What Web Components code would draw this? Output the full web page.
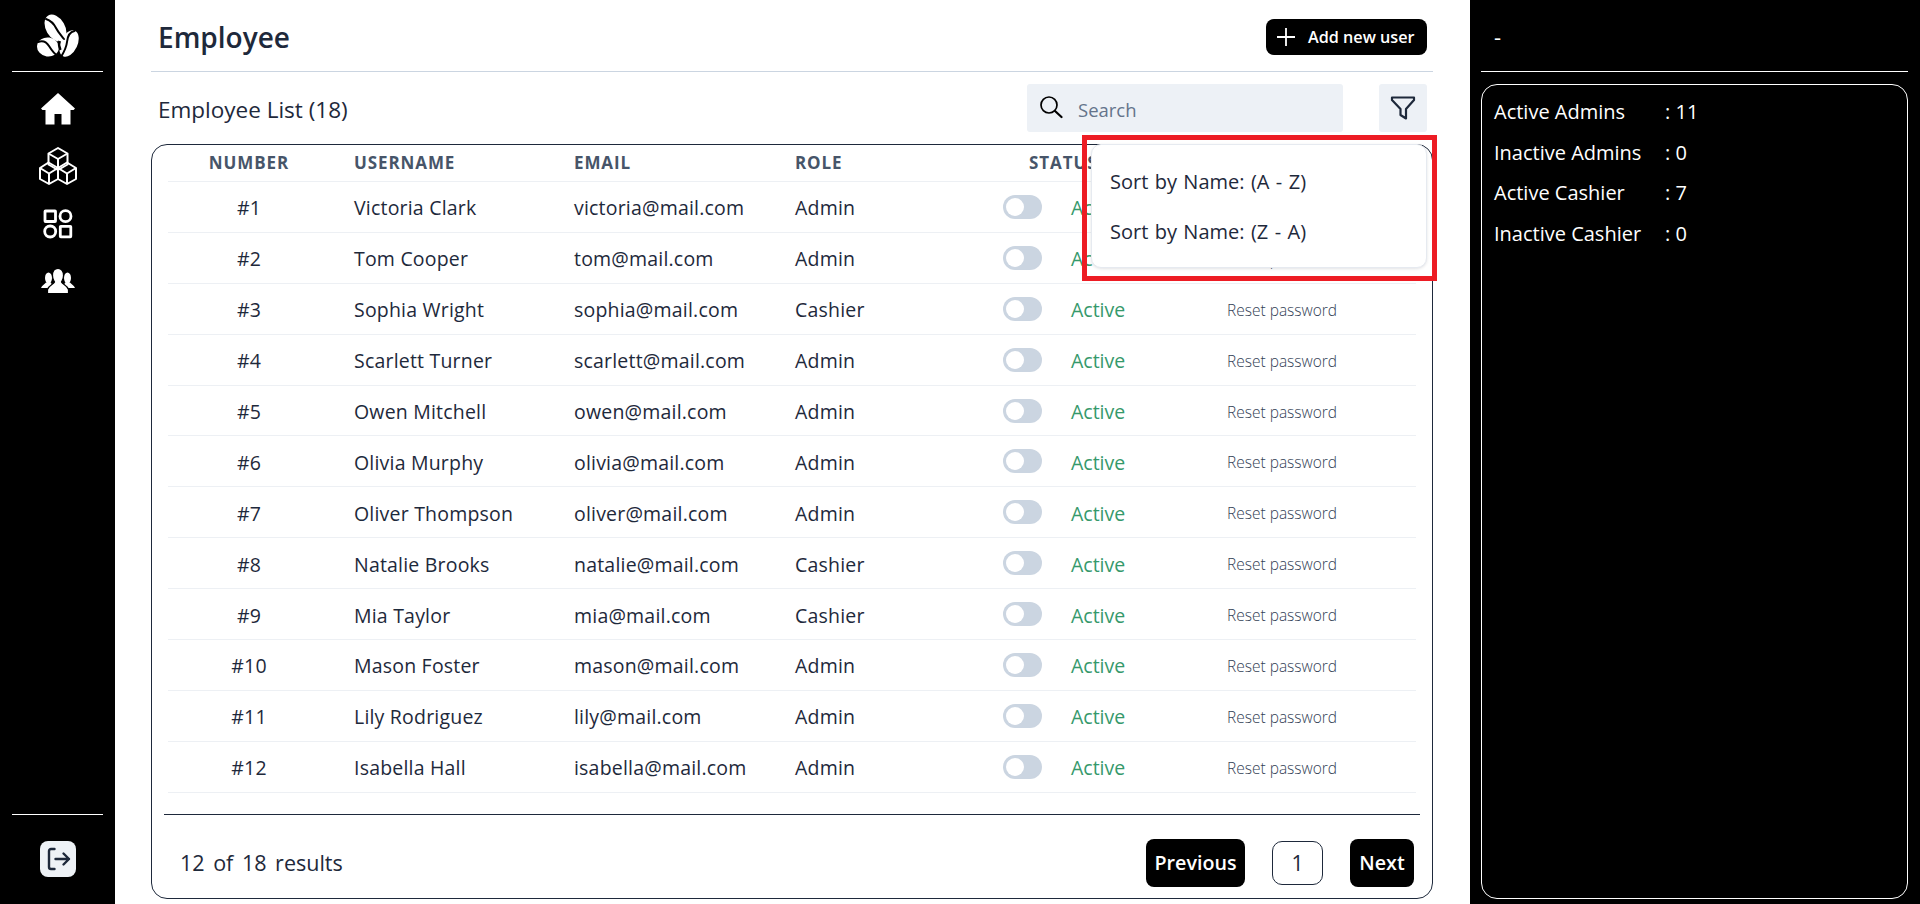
<!doctype html>
<html><head><meta charset="utf-8"><title>Employee</title>
<style>
html,body{margin:0;height:904px;overflow:hidden;background:#fff;font-family:"Open Sans","Noto Sans",sans-serif;color:#1e293b}
</style></head><body>
<app-shell>
  <nav-rail slot="rail"></nav-rail>
  <employee-page slot="main"></employee-page>
  <stats-panel slot="side"></stats-panel>
</app-shell>
<script>
function def(name,html,init){customElements.define(name,class extends HTMLElement{constructor(){super();this.attachShadow({mode:'open'}).innerHTML=html;}connectedCallback(){if(init)init.call(this)}})}

def('app-shell',`<style>:host{display:flex;width:1920px;height:904px;position:relative;overflow:hidden}
::slotted([slot=rail]){flex:0 0 115px}::slotted([slot=main]){flex:0 0 1355px}::slotted([slot=side]){flex:0 0 450px}</style>
<slot name="rail"></slot><slot name="main"></slot><slot name="side"></slot>`);

def('nav-rail',`<style>:host{display:flex;flex-direction:column;background:#000;height:904px;box-sizing:border-box;padding:0 12px}
.logo{height:71px;display:flex;align-items:center;justify-content:center;flex:none}
hr{margin:0;border:0;height:1px;background:#fff;flex:none}
nav{display:flex;flex-direction:column;margin-top:8px;flex:1}
.i{height:57.5px;display:flex;align-items:center;justify-content:center}
.out{height:89px;display:flex;align-items:flex-start;justify-content:center;padding-top:26px;box-sizing:border-box;flex:none}
.btn{width:36px;height:36px;border-radius:8px;background:#eef2f6;display:flex;align-items:center;justify-content:center}
svg{display:block}</style>
<div class="logo"><svg width="42" height="44" viewBox="0 0 42 44">
 <g fill="#fff">
  <ellipse cx="18.500" cy="14" rx="9.500" ry="14.500" transform="rotate(-30 18.500 14)"/>
  <ellipse cx="11" cy="33" rx="11" ry="9.500" transform="rotate(8 11 33)"/>
  <ellipse cx="32" cy="29.500" rx="8.500" ry="14" transform="rotate(25 32 29.500)"/>
 </g>
 <g fill="none" stroke="#000" stroke-width="2" stroke-linecap="round">
  <path d="M9 5C15 7 17 10 19 14S23 20 27 25"/>
  <path d="M1 28C6 26 9.500 28 12 32S17 40 21 42"/>
  <path d="M37.500 17C32 18 30.500 23 30 28S27 38 24 43"/>
 </g>
 <path d="M22.500 27C21.500 30 22 33 23.500 36" fill="none" stroke="#000" stroke-width="2.400"/></svg></div>
<hr>
<nav>
 <div class="i"><svg width="34" height="32" viewBox="0 0 34 32"><path fill="#fff" d="M17 0L34 15.500 32.600 17H29.500V31.500H20.500V21H13.500V31.500H4.500V17H1.400L0 15.500Z"/></svg></div>
 <div class="i"><svg width="38" height="38" viewBox="0 0 38 38" fill="none" stroke="#fff" stroke-width="2" stroke-linejoin="round"><path d="M19 1L28.500 6.500V17.500L19 23 9.500 17.500V6.500Z"/><path d="M9.500 6.500L19 12 28.500 6.500M19 12V23"/><path d="M9.500 15.500L19 21V32L10 37 1 32V21Z"/><path d="M1 21L10 26.500 19 21M10 26.500V37"/><path d="M28 15.500L37 21V32L28 37 19 32V21Z"/><path d="M19 21L28 26.500 37 21M28 26.500V37"/></svg></div>
 <div class="i"><svg width="30" height="30" viewBox="0 0 30 30" fill="none" stroke="#fff" stroke-width="2.800"><rect x="2" y="2" width="10.500" height="10.500" rx=".5"/><circle cx="22.500" cy="7.200" r="5.500"/><circle cx="7.200" cy="22.500" r="5.500"/><rect x="17.300" y="17.300" width="10.500" height="10.500" rx=".5"/></svg></div>
 <div class="i"><svg width="34" height="24" viewBox="0 0 34 24" fill="#fff"><ellipse cx="7.500" cy="9" rx="3.500" ry="5.500"/><path d="M0 19C1 16 3.500 15.500 5 13.500H10L12 19Z"/><ellipse cx="26.500" cy="9" rx="3.500" ry="5.500"/><path d="M34 19C33 16 30.500 15.500 29 13.500H24L22 19Z"/><g stroke="#000" stroke-width="1.200"><path d="M17 -.5C13.500 -.5 11.500 2.500 11.500 6.500S13 11.500 13.500 13C12.500 15.500 8 16 6.500 20.500V24.500H27.500V20.500C26 16 21.500 15.500 20.500 13C21 11.500 22.500 10.500 22.500 6.500S20.500 -.5 17 -.5Z"/></g></svg></div>
</nav>
<hr>
<div class="out"><div class="btn"><svg width="28" height="28" viewBox="0 0 28 28" fill="none" stroke="#1e293b" stroke-width="2.400" stroke-linecap="round" stroke-linejoin="round"><path d="M10.500 4H7A2 2 0 0 0 5 6V22A2 2 0 0 0 7 24H10.500"/><path d="M11.500 14H25M19.500 8.500L25 14 19.500 19.500"/></svg></div></div>`);

def('page-header',`<style>:host{display:flex;align-items:center;justify-content:space-between;height:71px;padding:0 6px 0 7px;border-bottom:1px solid #cbd5e1;box-sizing:content-box}
h1{margin:2px 0 0;font-size:28px;font-weight:600;color:#1e293b;line-height:1}
button{all:unset;display:flex;align-items:center;height:36px;width:161px;box-sizing:border-box;padding-left:11px;background:#000;border-radius:8px;color:#fff;font-size:16.200px;font-weight:600;margin-top:2px}
svg{margin-right:13px;flex:none}</style>
<h1>Employee</h1><button><svg width="18" height="18" viewBox="0 0 18 18" stroke="#fff" stroke-width="1.800" fill="none"><path d="M9 0V18M0 9H18"/></svg>Add new user</button>`);

def('list-toolbar',`<style>:host{display:flex;align-items:center;height:48px;margin-top:12px;padding:0 6px 0 7px}
.t{font-size:22.500px;flex:1;padding-top:2px}
.s{width:316px;height:48px;background:#edf1f6;border-radius:3px;display:flex;align-items:center;box-sizing:border-box;padding-left:12px;font-size:18.500px;color:#64748b}
.s svg{margin:0 15px 2px 0;flex:none}
.s span{padding-top:2px}
.f{width:48px;height:48px;background:#edf1f6;border-radius:3px;margin-left:36px;display:flex;align-items:center;justify-content:center}</style>
<span class="t">Employee List (18)</span>
<div class="s"><svg width="24" height="24" viewBox="0 0 24 24" fill="none" stroke="#000" stroke-width="1.700" stroke-linecap="round"><circle cx="10" cy="10" r="8"/><path d="M16 16L22.500 22" stroke-width="2.200"/></svg><span>Search</span></div>
<div class="f"><svg width="26" height="26" viewBox="0 0 26 26" fill="none" stroke="#1e293b" stroke-width="2.200" stroke-linejoin="round"><path d="M2 2.500H24V5L16 14V23.500L10.500 20V14L2 5Z"/></svg></div>`);

const GRID=`display:grid;grid-template-columns:162px 220px 221px 208px 224px 213px;`;
def('table-head',`<style>:host{${GRID}height:36px;border-bottom:1px solid #edf0f4;align-items:center;font-size:17px;font-weight:700;letter-spacing:.9px;color:#475569;box-sizing:content-box}
span{padding:0 0 2px 24px}.n{padding:0 0 2px;text-align:center}.st{grid-column:5;padding-left:50px}</style>
<span class="n">NUMBER</span><span>USERNAME</span><span>EMAIL</span><span>ROLE</span><span class="st">STATUS</span>`);

def('emp-row',`<style>:host{${GRID}height:49.900px;border-bottom:1px solid #edf0f4;align-items:center;font-size:19.500px;letter-spacing:.2px;color:#1e293b}
.c{padding:2px 0 0 24px;white-space:nowrap}.n{text-align:center;padding:2px 0 0}
.st{display:flex;align-items:center;padding-top:0}
.tg{width:39px;height:24px;border-radius:12px;background:#cbd5e1;flex:none;display:flex;align-items:center;padding-left:3px;box-sizing:border-box;margin-right:29px}
.k{width:18px;height:18px;border-radius:50%;background:#fff}
.a{color:#35996b;letter-spacing:0;padding-top:2px}.r{font-size:15.500px;font-weight:300;color:#334155;letter-spacing:0}</style>
<div class="c n"><slot name="num"></slot></div><div class="c"><slot name="name"></slot></div><div class="c"><slot name="mail"></slot></div><div class="c"><slot name="role"></slot></div>
<div class="c st"><div class="tg"><div class="k"></div></div><span class="a"><slot name="state"></slot></span></div><div class="c r"><slot name="act"></slot></div>`);

const people=[["Victoria Clark","victoria","Admin"],["Tom Cooper","tom","Admin"],["Sophia Wright","sophia","Cashier"],["Scarlett Turner","scarlett","Admin"],["Owen Mitchell","owen","Admin"],["Olivia Murphy","olivia","Admin"],["Oliver Thompson","oliver","Admin"],["Natalie Brooks","natalie","Cashier"],["Mia Taylor","mia","Cashier"],["Mason Foster","mason","Admin"],["Lily Rodriguez","lily","Admin"],["Isabella Hall","isabella","Admin"]];

def('emp-table',`<style>:host{display:block;flex:1;margin-top:12px;border:1px solid #1e293b;border-radius:16px;box-sizing:border-box;padding:0 12px}
.rows{margin:0 4px;height:648px;}
footer{border-top:1px solid #1e293b;display:flex;align-items:center;height:84px;box-sizing:border-box;padding:12px 6px 0 16px;margin-top:21px}
.sum{font-size:21.500px;flex:1;word-spacing:3px}
.b{background:#000;color:#fff;height:48px;border-radius:8px;font-weight:600;font-size:19.700px;display:flex;align-items:center;justify-content:center}
.p{width:99px}.x{width:64px}
.one{width:51px;height:44px;border:1px solid #1e293b;border-radius:10px;box-sizing:border-box;margin:0 27px;display:flex;align-items:center;justify-content:center;font-size:21px}</style>
<div class="rows"><table-head></table-head><slot></slot></div>
<footer><span class="sum">12 of 18 results</span><div class="b p">Previous</div><div class="one">1</div><div class="b x">Next</div></footer>`,
function(){ if(this.children.length) return;
 people.forEach((p,i)=>{const r=document.createElement('emp-row');
  r.innerHTML=`<span slot="num">#${i+1}</span><span slot="name">${p[0]}</span><span slot="mail">${p[1]}@mail.com</span><span slot="role">${p[2]}</span><span slot="state">Active</span><span slot="act">Reset password</span>`;
  this.appendChild(r);});
});

def('sort-menu',`<style>:host{position:absolute;left:976px;top:144px;width:336px;height:124px;box-sizing:border-box;background:#fff;border:1px solid #e6eaf0;border-radius:10px;box-shadow:0 1px 3px rgba(15,23,42,.12);padding:11.500px 0 0 18px;font-size:20px;word-spacing:1.200px;color:#1e293b;z-index:2}
div{height:50px;display:flex;align-items:center;white-space:pre}</style><div>Sort by Name: (A - Z)</div><div>Sort by Name: (Z - A)</div>`);

def('employee-page',`<style>:host{display:flex;flex-direction:column;position:relative;box-sizing:border-box;height:904px;padding:0 37px 5px 36px;background:#fff}</style>
<page-header></page-header><list-toolbar></list-toolbar><emp-table></emp-table><sort-menu></sort-menu>
<callout-box></callout-box>`);

def('callout-box',`<style>:host{position:absolute;left:967px;top:135px;width:355px;height:146px;box-sizing:border-box;border:5px solid #ed1c24;z-index:3;pointer-events:none}</style>`);

def('stats-panel',`<style>:host{display:flex;flex-direction:column;background:#000;color:#fff;box-sizing:border-box;height:904px;padding:0 12px 5px 11px}
.top{height:71px;border-bottom:1px solid #fff;font-size:22px;padding:0 0 0 13px;display:flex;align-items:center}
.card{flex:1;margin-top:12px;border:1px solid #fff;border-radius:16px;padding:6.500px 12px 0;font-size:20px}
.r{display:flex;height:40.500px;align-items:center}.l{width:171px}</style>
<div class="top"><span>-</span></div>
<div class="card">
<div class="r"><span class="l">Active Admins</span><span>: 11</span></div>
<div class="r"><span class="l">Inactive Admins</span><span>: 0</span></div>
<div class="r"><span class="l">Active Cashier</span><span>: 7</span></div>
<div class="r"><span class="l">Inactive Cashier</span><span>: 0</span></div>
</div>`);
</script>
</body></html>
